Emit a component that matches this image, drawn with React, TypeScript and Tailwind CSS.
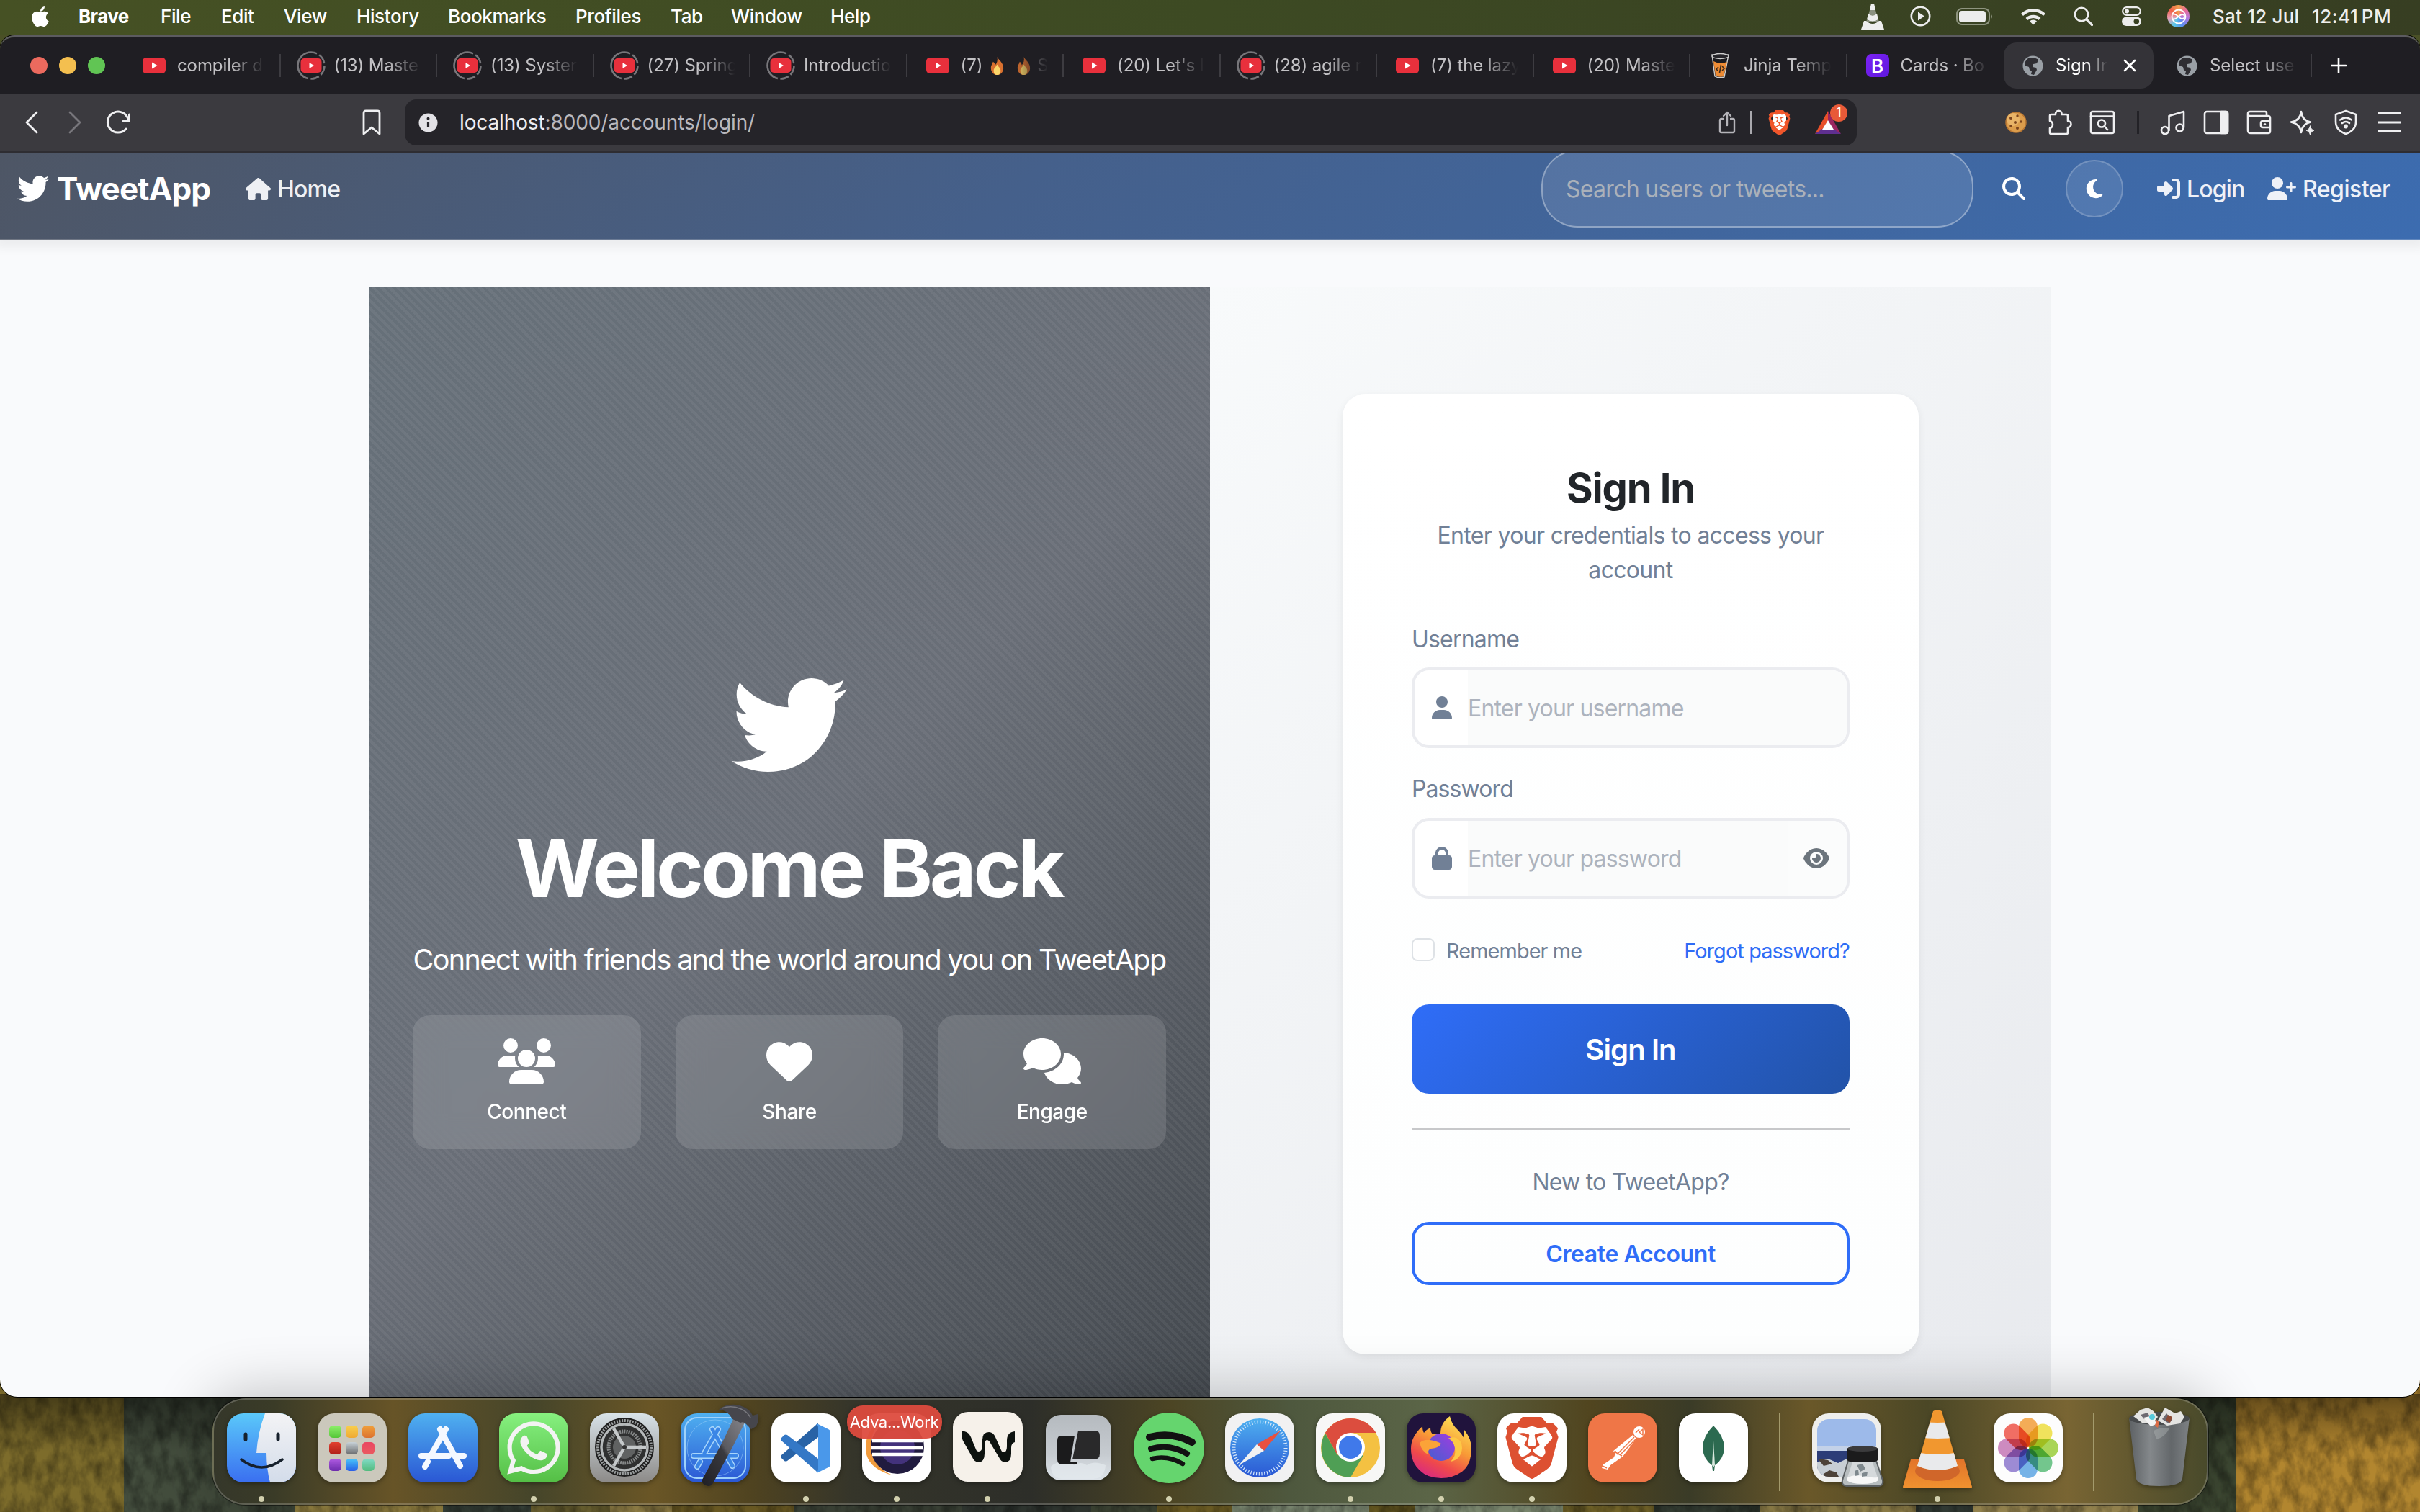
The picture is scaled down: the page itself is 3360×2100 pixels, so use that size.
import React from "react";
import {
  FaApple,
  FaTwitter,
  FaHouse,
  FaMagnifyingGlass,
  FaMoon,
  FaRightToBracket,
  FaUserPlus,
  FaUsers,
  FaHeart,
  FaComments,
  FaUser,
  FaLock,
  FaEye,
  FaWhatsapp,
} from "react-icons/fa6";
import { SiBrave } from "react-icons/si";

/* ---------- macOS menu bar ---------- */

const menuItems: [string, string][] = [
  ["Brave", "w-[114px] font-bold tracking-[-0.6px]"],
  ["File", "w-[84px]"],
  ["Edit", "w-[87px]"],
  ["View", "w-[101px]"],
  ["History", "w-[127px]"],
  ["Bookmarks", "w-[177px]"],
  ["Profiles", "w-[132px]"],
  ["Tab", "w-[84px]"],
  ["Window", "w-[138px]"],
  ["Help", "w-[80px]"],
];

function MenuBar() {
  return (
    <div className="flex h-12 items-center bg-gradient-to-r from-[#465124] via-[#3d4a23] to-[#373e22] pb-[3px] pl-[40px] text-[26px] font-medium tracking-[-0.4px] text-white">
      <div className="w-[69px] flex-none">
        <FaApple className="size-[32px]" />
      </div>
      {menuItems.map(([label, cls]) => (
        <div key={label} className={"flex-none whitespace-nowrap " + cls}>
          {label}
        </div>
      ))}
      <div className="flex-1" />
      <div className="flex items-center text-[#ececec]">
        <svg className="mr-[36px] h-[36px] w-[32px]" viewBox="0 0 32 36">
          <path d="M14 0h4l2 9h-8z" fill="#eee" />
          <path d="M12 9h8l2 7H10z" fill="#8b9180" />
          <path d="M10 14q6 5 12 0l2 8q-8 6-16 0z" fill="#eee" />
          <path d="M8 22q8 5 16 0l1 4H7z" fill="#8b9180" />
          <path d="M4 24h3q9 8 18 0h3l4 12H0z" fill="#eee" />
        </svg>
        <svg className="mr-[35px] size-[29px]" viewBox="0 0 29 29" fill="none">
          <circle cx="14.5" cy="14.5" r="12.7" stroke="currentColor" strokeWidth="2.6" />
          <path d="M11 8.5l9 6-9 6z" fill="currentColor" />
        </svg>
        <svg className="mr-[37px] h-[24px] w-[52px]" viewBox="0 0 52 24" fill="none">
          <rect x="1" y="1" width="45" height="22" rx="7" stroke="#8f9580" strokeWidth="2" />
          <rect x="4" y="4" width="37" height="16" rx="4" fill="currentColor" />
          <path d="M48 8q4 4 0 8z" fill="#8f9580" />
        </svg>
        <svg className="mr-[38px] h-[25px] w-[36px]" viewBox="0 0 36 25" fill="none" stroke="currentColor">
          <path d="M2.5 10.5a22 22 0 0 1 31 0" strokeWidth="4.4" />
          <path d="M9 16.5a13 13 0 0 1 18 0" strokeWidth="4.2" />
          <path d="M18 24.5l-5-5a7 7 0 0 1 10 0z" fill="currentColor" stroke="none" />
        </svg>
        <svg className="mr-[40px] size-[27px]" viewBox="0 0 27 27" fill="none" stroke="currentColor" strokeWidth="2.6" strokeLinecap="round">
          <circle cx="11" cy="11" r="9.2" />
          <path d="M18 18l7.5 7.5" strokeWidth="3.2" />
        </svg>
        <svg className="mr-[36px] size-[27px]" viewBox="0 0 27 27" fill="none">
          <rect x="1.2" y="1.2" width="24.6" height="10.6" rx="5.3" stroke="currentColor" strokeWidth="2.2" />
          <circle cx="7" cy="6.5" r="3" fill="currentColor" />
          <rect x="0" y="14.5" width="27" height="12.5" rx="6.2" fill="currentColor" />
          <circle cx="20.3" cy="20.7" r="3.8" fill="#394122" />
        </svg>
        <div className="mr-[32px] flex size-[31px] items-center justify-center rounded-full bg-[conic-gradient(#f0a050,#e86a9a,#b07ae0,#5b8cf0,#58c8e8,#e8a0b8,#f0604a,#f0a050)]">
          <svg className="size-[24px]" viewBox="0 0 24 24" fill="none" stroke="#fff" strokeWidth="1.8">
            <circle cx="12" cy="12" r="9.5" />
            <path d="M4 9c5-3 8 6 13 6 4 0 4-6 0-6-5 0-8 9-13 6" />
          </svg>
        </div>
      </div>
      <div className="w-[138px] flex-none whitespace-nowrap tracking-[0.2px] text-[#efefec]">Sat 12 Jul</div>
      <div className="w-[150px] flex-none whitespace-nowrap tracking-[0.5px] text-[#efefec] [word-spacing:-3px]">12:41 PM</div>
    </div>
  );
}

/* ---------- Browser tabs ---------- */

function YouTubeIcon({ loading }: { loading?: boolean }) {
  return (
    <svg className="size-[40px]" viewBox="0 0 40 40" fill="none">
      {loading ? (
        <>
          <circle cx="20" cy="20" r="18.5" stroke="#77767a" strokeWidth="2.6" strokeDasharray="14 3.5 12 3.5 62 3.5 14 3.7" />
          <rect x="5.5" y="10" width="29" height="20" rx="5" fill="#e8303c" />
          <path d="M17.500 16v8l6.500-4z" fill="#fff" />
        </>
      ) : (
        <>
          <rect x="4" y="9" width="32" height="22" rx="5" fill="#e8303c" />
          <path d="M17 15.500v9l7.500-4.500z" fill="#fff" />
        </>
      )}
    </svg>
  );
}

function Globe() {
  return (
    <svg className="size-[29px]" viewBox="0 0 29 29">
      <circle cx="14.500" cy="14.500" r="14" fill="#9aa0a6" />
      <path d="M14 3q6 1 8 3l-2 5-5 1-1 4 5 1 1 3-4 7-4-1 1-4-3-2-1-4-5-2-1 2q-1-8 5-12z" fill="#2f2e33" />
    </svg>
  );
}

function Flame() {
  return (
    <svg className="size-[25px] flex-none" viewBox="0 0 26 26">
      <path d="M13 0c2 5 9 8 9 16 0 6-4 10-9 10s-9-4-9-10c0-4 2-5 3-9 2 1 3 3 3 5 3-3 4-7 3-12z" fill="#d8702f" />
      <path d="M13 11c2 4 5 5 5 9 0 4-2 6-5 6s-5-2-5-6 3-5 5-9z" fill="#fbd66a" />
    </svg>
  );
}

function JinjaIcon() {
  return (
    <svg className="size-[36px]" viewBox="0 0 36 36">
      <path d="M6 3l4 30q5 3 13 1l6-31z" fill="#1b1b1f" stroke="#cfcfcf" strokeWidth="1.4" />
      <path d="M8 12l3 20q5 3 11 1l5-20q-10 4-19-1z" fill="#ee8c35" />
      <ellipse cx="17.500" cy="5" rx="11.500" ry="3.500" fill="#26252a" stroke="#cfcfcf" strokeWidth="1.300" />
      <path d="M15 20l-3 3 3 3M20 19l3 3-3 3M18.500 17l-2 11" fill="none" stroke="#3a2a1c" strokeWidth="1.600" />
    </svg>
  );
}

function BootstrapIcon() {
  return (
    <div className="flex size-[32px] items-center justify-center rounded-[7px] bg-gradient-to-br from-[#7b22f5] to-[#5f17dd] text-[26px] font-semibold text-white">
      B
    </div>
  );
}

const tabs: { icon: React.ReactNode; title: React.ReactNode; sep?: boolean; active?: boolean }[] = [
  { icon: <YouTubeIcon />, title: "compiler d", sep: true },
  { icon: <YouTubeIcon loading />, title: "(13) Maste", sep: true },
  { icon: <YouTubeIcon loading />, title: "(13) Syster", sep: true },
  { icon: <YouTubeIcon loading />, title: "(27) Spring", sep: true },
  { icon: <YouTubeIcon loading />, title: "Introductio", sep: true },
  {
    icon: <YouTubeIcon />,
    title: (
      <span className="flex items-center">
        (7)
        <span className="ml-[8px] mr-[12px] flex-none">
          <Flame />
        </span>
        <Flame />
        <span className="ml-[6px]">S</span>
      </span>
    ),
    sep: true,
  },
  { icon: <YouTubeIcon />, title: "(20) Let's l", sep: true },
  { icon: <YouTubeIcon loading />, title: "(28) agile r", sep: true },
  { icon: <YouTubeIcon />, title: "(7) the lazy", sep: true },
  { icon: <YouTubeIcon />, title: "(20) Maste", sep: true },
  { icon: <JinjaIcon />, title: "Jinja Temp", sep: true },
  { icon: <BootstrapIcon />, title: "Cards · Bo" },
  { icon: <Globe />, title: "Sign In", active: true },
  { icon: <Globe />, title: "Select use", sep: true },
];

function TabStrip() {
  return (
    <div className="flex h-[78px] items-center bg-[#1f1e23] pl-[42px] pr-[40px]">
      <div className="flex w-[130px] flex-none gap-4">
        <div className="size-6 rounded-full bg-[#ec6a5e]" />
        <div className="size-6 rounded-full bg-[#f4bf4f]" />
        <div className="size-6 rounded-full bg-[#61c554]" />
      </div>
      {tabs.map((t, i) => (
        <div
          key={i}
          className={
            "flex h-[64px] flex-none items-center " +
            (t.active ? "mr-[4px] w-[208px] rounded-[18px] bg-[#343338] text-white" : "w-[217.500px] text-[#c3c2c5] last-of-type:w-[216px]")
          }
        >
          <div className={"flex w-[40px] flex-none justify-center " + (t.active ? "ml-[20px]" : "ml-[22px]")}>{t.icon}</div>
          <div
            className={
              "ml-[12px] flex-none overflow-hidden whitespace-nowrap text-[24px] leading-[34px] tracking-[-0.1px] " +
              (t.active
                ? "w-[82px] [mask-image:linear-gradient(to_right,black_55%,transparent_88%)]"
                : "w-[128px] [mask-image:linear-gradient(to_right,black_58%,transparent_95%)]")
            }
          >
            {t.title}
          </div>
          {t.active && (
            <svg className="ml-[12px] size-[18px]" viewBox="0 0 18 18" stroke="#fff" strokeWidth="2.600" strokeLinecap="round">
              <path d="M2 2l14 14M16 2L2 16" />
            </svg>
          )}
          <div className="flex-1" />
          {t.sep && <div className="h-8 w-[2px] bg-[#3d3c41]" />}
        </div>
      ))}
      <svg className="ml-[26px] size-[22px]" viewBox="0 0 22 22" stroke="#fff" strokeWidth="2.600" strokeLinecap="round">
        <path d="M11 1v20M1 11h20" />
      </svg>
    </div>
  );
}

/* ---------- Browser toolbar ---------- */

function Slot({ children }: { children: React.ReactNode }) {
  return (
    <div className="flex w-[60px] flex-none justify-center">
      <svg className="size-[36px]" viewBox="0 0 36 36" fill="none" stroke="#efeff1" strokeWidth="2.600" strokeLinecap="round" strokeLinejoin="round">
        {children}
      </svg>
    </div>
  );
}

function BraveShield() {
  return (
    <div className="relative ml-[21px] flex h-[37px] w-[35px] items-center justify-center">
      <div className="absolute inset-x-[8px] inset-y-[7px] rounded-b-full bg-white" />
      <SiBrave className="relative size-[37px] text-[#f0562b]" />
    </div>
  );
}

function Toolbar() {
  return (
    <div className="flex h-[82px] items-center border-b-2 border-[#2e2d32] bg-[#3b3a3f] pl-[14px]">
      <Slot>
        <path d="M25 4L11 18l14 14" strokeWidth="2.800" />
      </Slot>
      <Slot>
        <path d="M11 4l14 14-14 14" stroke="#77767b" strokeWidth="2.800" />
      </Slot>
      <Slot>
        <path d="M29 27a14.500 14.500 0 1 1 3-13" strokeWidth="3" />
        <path d="M33.500 7v9.500h-9" strokeWidth="3" />
      </Slot>
      <div className="ml-[292px]">
        <Slot>
          <path d="M7 5q0-3 3-3h16q3 0 3 3v29l-11-9-11 9z" strokeWidth="2.800" />
        </Slot>
      </div>
      <div className="ml-4 flex h-16 w-[2016px] flex-none items-center rounded-2xl bg-[#252429] pl-[19px] pr-[22px]">
        <svg className="size-[27px]" viewBox="0 0 27 27">
          <circle cx="13.500" cy="13.500" r="13" fill="#e3e2e6" />
          <path d="M13.500 12v8" stroke="#252429" strokeWidth="3.200" />
          <circle cx="13.500" cy="7.800" r="2" fill="#252429" />
        </svg>
        <div className="ml-[30px] whitespace-nowrap text-[28px] tracking-[-0.120px] text-[#b9b8bd]">
          <span className="text-[#ededf0]">localhost</span>:8000/accounts/login/
        </div>
        <div className="flex-1" />
        <svg className="h-[34px] w-[24px]" viewBox="0 0 24 34" fill="none" stroke="#b5b4b9" strokeWidth="2.400" strokeLinecap="round" strokeLinejoin="round">
          <path d="M7 12H4q-2 0-2 2v15q0 2 2 2h16q2 0 2-2V14q0-2-2-2h-3M12 21V3M7 8l5-5 5 5" />
        </svg>
        <div className="ml-[20px] h-8 w-[2px] bg-[#aaa9ae]" />
        <BraveShield />
        <div className="relative ml-[32px]">
          <svg className="h-[32px] w-[36px]" viewBox="0 0 36 32">
            <path d="M18 0v14l-8 12L0 32z" fill="#e8502a" />
            <path d="M18 0l18 32-10-6-8-12z" fill="#9b2560" />
            <path d="M0 32l10-7h16l10 7z" fill="#5f2f90" />
            <path d="M18 13l8 13H10z" fill="#fff" />
          </svg>
          <div className="absolute -right-[9px] -top-[9px] flex size-[24px] items-center justify-center rounded-full bg-[#e85a38] text-[17px] font-medium text-white">
            1
          </div>
        </div>
      </div>
      <div className="ml-[191px] flex items-center">
        <Slot>
          <circle cx="18" cy="18" r="14" fill="#dc9d4c" stroke="#b97733" strokeWidth="1.500" />
          <circle cx="14" cy="14" r="9" fill="#e9b468" stroke="none" />
          <g fill="#7a431d" stroke="none">
            <circle cx="11" cy="12" r="2" />
            <circle cx="20" cy="9" r="1.700" />
            <circle cx="17" cy="18" r="2" />
            <circle cx="25" cy="17" r="1.800" />
            <circle cx="11" cy="23" r="1.800" />
            <circle cx="20" cy="26" r="2" />
          </g>
        </Slot>
        <Slot>
          <path d="M5 9q0-2 2-2h6V6a4 4 0 0 1 8.500 0v1H28q2 0 2 2v7a4.500 4.500 0 0 1 0 9v7q0 2-2 2H7q-2 0-2-2v-6q4-1 4-5t-4-5z" />
        </Slot>
        <Slot>
          <rect x="2" y="3" width="32" height="30" rx="2.500" />
          <path d="M2 9.500h32" />
          <circle cx="17" cy="19.500" r="5" />
          <path d="M21 23.500l4 4.500" />
        </Slot>
        <div className="flex w-[38px] justify-center">
          <div className="h-8 w-[3px] bg-[#232227]" />
        </div>
        <Slot>
          <path d="M12.500 29V9L33 3v22" />
          <circle cx="7" cy="29" r="5" />
          <circle cx="27.500" cy="25.500" r="5" />
        </Slot>
        <Slot>
          <rect x="2" y="3" width="32" height="30" rx="3" />
          <path d="M25 3h7q2 0 2 2v26q0 2-2 2h-7z" fill="#efeff1" />
        </Slot>
        <Slot>
          <path d="M28 9V5q0-2-2-2H5Q2 3 2 6v23q0 4 4 4h24q3 0 3-3V12q0-3-3-3H5Q2 9 2 6M33 16H23q-3 0-3 3v3q0 3 3 3h10M25 20.500h1" />
        </Slot>
        <Slot>
          <path d="M16 3q1.500 12.500 13 14.500Q17.500 20 16 32 14.500 20 2 17.500 14.500 15.500 16 3z" />
          <path d="M28.500 23q.8 5 5.500 6-4.700 1-5.500 6-.8-5-5.500-6 4.700-1 5.500-6z" fill="#efeff1" strokeWidth="1" />
        </Slot>
        <Slot>
          <path d="M18 2l14 5v10q0 12-14 17Q4 29 4 17V7z" />
          <path d="M10 14.500q8-6 16 0M13 19q5-4 10 0" />
          <circle cx="18" cy="23.500" r="1.600" fill="#efeff1" />
        </Slot>
        <Slot>
          <path d="M2 5.500h32M2 18h32M2 30.500h32" strokeWidth="2.800" strokeLinecap="butt" />
        </Slot>
      </div>
    </div>
  );
}

/* ---------- TweetApp page ---------- */

function NavBar() {
  return (
    <div className="relative z-10 h-[122px] overflow-hidden border-b-2 border-white/20 bg-[linear-gradient(135deg,#4e5665_0%,#45608b_42%,#3c6cb0_100%)] text-white">
      <div className="flex h-[100px] items-center">
        <FaTwitter className="ml-[24px] size-[44px] flex-none" />
        <div className="ml-[11px] w-[262px] flex-none whitespace-nowrap text-[44px] font-bold tracking-[-0.9px]">TweetApp</div>
        <FaHouse className="size-[35px] flex-none text-[#eef0f4]" />
        <div className="ml-[9px] flex-none whitespace-nowrap pt-[2px] text-[32px] font-medium tracking-[-0.8px] text-[#eef0f4]">Home</div>
        <div className="flex-1" />
        <div className="flex h-[108px] w-[600px] flex-none items-center rounded-[50px] border-2 border-white/35 bg-white/10 pl-[32px] pt-[2px] text-[32px] tracking-[-0.700px] text-[#aab1ba]">
          Search users or tweets...
        </div>
        <FaMagnifyingGlass className="ml-[40px] size-[32px] flex-none" />
        <div className="ml-[56px] flex size-[80px] flex-none items-center justify-center rounded-full border-2 border-white/20 bg-white/10">
          <FaMoon className="size-[30px]" />
        </div>
        <FaRightToBracket className="ml-[47px] size-[32px] flex-none text-[#eef1f8]" />
        <div className="ml-[9px] w-[112px] flex-none whitespace-nowrap pt-[2px] text-[32px] font-medium tracking-[-0.8px] text-[#eef1f8]">Login</div>
        <FaUserPlus className="h-[32px] w-[40px] flex-none text-[#eef1f8]" />
        <div className="ml-[9px] w-[163px] flex-none whitespace-nowrap pt-[2px] text-[32px] font-medium tracking-[-0.5px] text-[#eef1f8]">Register</div>
      </div>
    </div>
  );
}

function Feature({ icon, label }: { icon: React.ReactNode; label: string }) {
  return (
    <div className="flex h-[186px] flex-1 flex-col items-center rounded-[24px] bg-white/12 pt-8 text-white backdrop-blur-[20px]">
      {icon}
      <div className="mt-[17px] text-[28px] font-medium leading-[42px] tracking-[-0.45px]">{label}</div>
    </div>
  );
}

function WelcomePanel() {
  return (
    <div className="flex w-[1168px] flex-none flex-col items-center bg-[repeating-linear-gradient(45deg,transparent_0_4px,rgba(255,255,255,0.05)_4px_8px),linear-gradient(135deg,#667079_0%,#696e77_50%,#44494f_100%)] pt-[529px] text-white">
      <FaTwitter className="size-[160px]" />
      <h1 className="mt-[51px] whitespace-nowrap pr-[2px] text-[112px] font-bold leading-[134px] tracking-[-4.1px]">Welcome Back</h1>
      <p className="mt-[31px] whitespace-nowrap text-[39.500px] leading-[60px] tracking-[-1.600px]">
        Connect with friends and the world around you on TweetApp
      </p>
      <div className="mt-[47px] flex w-[1046px] gap-12">
        <Feature icon={<FaUsers className="h-[64px] w-[80px]" />} label="Connect" />
        <Feature icon={<FaHeart className="size-[64px]" />} label="Share" />
        <Feature icon={<FaComments className="h-[64px] w-[80px]" />} label="Engage" />
      </div>
    </div>
  );
}

function Field({ icon, text, trailing }: { icon: React.ReactNode; text: string; trailing?: React.ReactNode }) {
  return (
    <div className="flex h-[112px] items-stretch overflow-hidden rounded-[24px] border-4 border-[#ebecf0] bg-white">
      <div className="flex w-[74px] flex-none items-center pl-[24px] text-[#718096]">{icon}</div>
      <div className="flex flex-1 items-center whitespace-nowrap bg-[#fafbfb] pt-[1px] text-[32px] tracking-[-0.820px] text-[#adb3bd]">{text}</div>
      {trailing}
    </div>
  );
}

function SignInCard() {
  return (
    <div className="mt-[149px] h-[1334px] w-[800px] rounded-[32px] bg-gradient-to-b from-white to-[#fdfefe] px-[96px] pt-[97px] shadow-[0_4px_12px_rgba(0,0,0,0.07)]">
      <h2 className="text-center text-[56px] font-bold leading-[68px] tracking-[-1.1px] text-[#212529]">Sign In</h2>
      <p className="mt-2 text-center text-[32px] leading-[48px] tracking-[-0.670px] text-[#718096]">
        Enter your credentials to access your
        <br />
        account
      </p>
      <div className="mt-12 text-[32px] leading-[48px] tracking-[-0.8px] text-[#718096]">Username</div>
      <div className="mt-[15px]">
        <Field icon={<FaUser className="h-[32px] w-[28px]" />} text="Enter your username" />
      </div>
      <div className="mt-[33px] text-[32px] leading-[48px] tracking-[-0.9px] text-[#718096]">Password</div>
      <div className="mt-[16px]">
        <Field
          icon={<FaLock className="h-[32px] w-[28px]" />}
          text="Enter your password"
          trailing={
            <div className="flex w-[81px] flex-none items-center bg-[#fbfcfc] pl-[21px] text-[#6c757d]">
              <FaEye className="h-[32px] w-[36px]" />
            </div>
          }
        />
      </div>
      <div className="mt-[55px] flex h-8 items-center">
        <div className="size-8 flex-none rounded-lg border-2 border-[#dee2e6] bg-white" />
        <div className="ml-[16px] mt-[4px] flex-1 whitespace-nowrap text-[28.800px] tracking-[-0.850px] text-[#718096]">Remember me</div>
        <div className="mt-[4px] whitespace-nowrap text-[28.800px] tracking-[-0.850px] text-[#2e6cf6]">Forgot password?</div>
      </div>
      <div className="mt-[60px] flex h-[124px] items-center justify-center rounded-[24px] bg-[linear-gradient(135deg,#2f6df8,#2253a8)] pt-[2px] text-[40px] font-semibold tracking-[-0.9px] text-white">
        Sign In
      </div>
      <div className="mt-12 h-[2px] bg-[#c7c8ca]" />
      <div className="mt-[49px] text-center text-[32px] leading-[48px] tracking-[-0.760px] text-[#718096]">New to TweetApp?</div>
      <div className="mt-[31px] flex h-[88px] items-center justify-center rounded-[24px] border-4 border-[#2f6df8] pt-[2px] text-[32px] font-semibold tracking-[-0.4px] text-[#2f6df8]">
        Create Account
      </div>
    </div>
  );
}

function Page() {
  return (
    <div className="flex h-[1728px] flex-col overflow-hidden bg-[#f9fafc]">
      <NavBar />
      <div className="relative z-0 h-0 shadow-[0_0_16px_8px_rgba(0,0,0,0.07)]" />
      <div className="mt-[64px] flex flex-1 justify-center">
        <WelcomePanel />
        <div className="flex w-[1168px] flex-none justify-center bg-[linear-gradient(135deg,#f8fafb,#e8eaee)]">
          <SignInCard />
        </div>
      </div>
    </div>
  );
}

/* ---------- Dock ---------- */

const art = "size-[96px] overflow-visible";

function Finder() {
  return (
    <svg className={art} viewBox="0 0 96 96">
      <defs>
        <linearGradient id="fin" x2="0" y2="1">
          <stop stopColor="#5ac8fa" />
          <stop offset="1" stopColor="#3a6ff0" />
        </linearGradient>
        <linearGradient id="fin2" x2="0" y2="1">
          <stop stopColor="#f3f3f5" />
          <stop offset="1" stopColor="#d3dcea" />
        </linearGradient>
        <clipPath id="finc">
          <rect width="96" height="96" rx="23" />
        </clipPath>
      </defs>
      <g clipPath="url(#finc)">
        <rect width="96" height="96" fill="url(#fin)" />
        <path d="M53 0Q43 26 41 55h14q0 22 5 41h40V0z" fill="url(#fin2)" />
      </g>
      <path d="M26 29v7M71 29v7" stroke="#16202c" strokeWidth="5" strokeLinecap="round" />
      <path d="M20 64q28 22 57 0" fill="none" stroke="#16202c" strokeWidth="3.500" strokeLinecap="round" />
    </svg>
  );
}

const launchpadTiles = [
  "bg-gradient-to-b from-[#8df06a] to-[#55c637]",
  "bg-gradient-to-b from-[#f8cf4c] to-[#efa934]",
  "bg-gradient-to-b from-[#f0a03a] to-[#dc7230]",
  "bg-gradient-to-b from-[#e2402f] to-[#b01f1a]",
  "bg-gradient-to-b from-[#c8d2d8] to-[#6c6e70]",
  "bg-gradient-to-b from-[#ea4662] to-[#ea5a60]",
  "bg-gradient-to-b from-[#b05ae2] to-[#6d2bac]",
  "bg-gradient-to-b from-[#4cc4fa] to-[#2c5ee6]",
  "bg-gradient-to-b from-[#80dbc6] to-[#52bb7e]",
];

function Launchpad() {
  return (
    <div className="grid size-[96px] grid-cols-[repeat(3,17px)] content-center justify-center gap-[6px] rounded-[23px] bg-[#cbc8bc]">
      {launchpadTiles.map((c) => (
        <div key={c} className={"size-[17px] rounded-[5px] " + c} />
      ))}
    </div>
  );
}

function Strokes({ color, width }: { color: string; width: number }) {
  return (
    <g stroke={color} strokeWidth={width} strokeLinecap="round" fill="none">
      <path d="M52 22L33 55M44 22l28 51M18 59h38M66 59h11M27 67l-4 7" />
    </g>
  );
}

function AppStore() {
  return (
    <svg className={art} viewBox="0 0 96 96">
      <defs>
        <linearGradient id="as" x2="0" y2="1">
          <stop stopColor="#4fb0f0" />
          <stop offset="1" stopColor="#2a57d4" />
        </linearGradient>
      </defs>
      <rect width="96" height="96" rx="23" fill="url(#as)" />
      <Strokes color="#f4f8ff" width={8} />
    </svg>
  );
}

function Whatsapp() {
  return (
    <div className="flex size-[96px] items-center justify-center rounded-[23px] bg-gradient-to-b from-[#86f07f] to-[#54bf45] text-[#f3f3f3]">
      <FaWhatsapp className="size-[84px]" />
    </div>
  );
}

function Settings() {
  return (
    <svg className={art} viewBox="0 0 96 96">
      <defs>
        <linearGradient id="set" x2="0" y2="1">
          <stop stopColor="#d8e2e8" />
          <stop offset="1" stopColor="#8c8a88" />
        </linearGradient>
      </defs>
      <rect width="96" height="96" rx="23" fill="url(#set)" />
      <circle cx="48" cy="47" r="41" fill="#1e1e1e" />
      <circle cx="48" cy="47" r="37" fill="none" stroke="#9a9e9f" strokeWidth="4" strokeDasharray="2 1.700" />
      <circle cx="48" cy="47" r="32" fill="#2f3030" stroke="#b5b9ba" strokeWidth="3.500" />
      <circle cx="48" cy="47" r="22" fill="none" stroke="#858888" strokeWidth="5" strokeDasharray="2 1.200" />
      <circle cx="48" cy="47" r="16" fill="#606262" />
      <path d="M48 47h30M48 47L33 21M48 47L33 73" stroke="#c5c9ca" strokeWidth="4.500" />
      <circle cx="48" cy="47" r="3" fill="#333" />
    </svg>
  );
}

function Xcode() {
  return (
    <svg className={art} viewBox="0 0 96 96">
      <defs>
        <linearGradient id="ham" x1="1" x2="0" y2="1">
          <stop stopColor="#85858b" />
          <stop offset="0.450" stopColor="#5a5a60" />
          <stop offset="0.500" stopColor="#3a3a40" />
          <stop offset="1" stopColor="#1f1f24" />
        </linearGradient>
      </defs>
      <rect width="96" height="96" rx="23" fill="url(#as)" />
      <g fill="none" stroke="#9fd2fa">
        <rect x="6" y="6" width="84" height="84" rx="17" strokeWidth="2" />
        <circle cx="48" cy="48" r="39" opacity="0.500" />
      </g>
      <Strokes color="#a9d6fb" width={8} />
      <Strokes color="#3b86e6" width={5} />
      <path d="M74 6l16 5-18 36-27 50q-4 6-10 3-7-3-5-8l29-54z" fill="url(#ham)" />
      <path d="M53-5Q64-15 82-11q14 4 18 14l7-2q3 7-2 17l-7 4-7-7q-3-4-8-2L72 8Q65-5 53-5z" fill="#46464c" />
      <path d="M57-7q14-5 27 1 9 4 13 12" fill="none" stroke="#76767c" strokeWidth="1.500" />
    </svg>
  );
}

function VSCode() {
  return (
    <svg className={art} viewBox="0 0 96 96">
      <rect width="96" height="96" rx="23" fill="#fff" />
      <path d="M14 58q-2 2 0 4l4 4q2 1 4 0l43-33V14q-2 0-3 2z" fill="#2963a6" />
      <path d="M14 38q-2-2 0-4l4-4q2-1 4 0l43 33v19q-2 0-3-2z" fill="#3478c6" />
      <path d="M65 15l14 7q3 1 3 5v43q0 4-3 5l-14 7q-2 1-3-1 3 0 3-4V20q0-4-3-4 1-2 3-1z" fill="#4a98ea" />
    </svg>
  );
}

function Eclipse() {
  return (
    <div className="relative">
      <svg className={art} viewBox="0 0 96 96">
        <rect width="96" height="96" rx="23" fill="#fff" />
        <path d="M30 8Q5 20 5 48t37 38Q14 74 12 46 12 22 30 8z" fill="#f19b3c" />
        <circle cx="49" cy="47" r="37" fill="#211b3f" />
        <circle cx="49" cy="47" r="24" fill="#43327c" />
        <path d="M14 38h70M12 48h73M14 57h70" stroke="#fff" strokeWidth="4.500" />
      </svg>
      <div className="absolute -left-[21px] -top-[11px] flex h-[46px] w-[132px] items-center justify-center whitespace-nowrap rounded-[22px] bg-[#dd4b3e]/95 pt-[1px] text-[22px] tracking-[-0.3px] text-white">
        Adva...Work
      </div>
    </div>
  );
}

function WApp() {
  return (
    <svg className={art} viewBox="0 0 96 96">
      <rect y="-2" width="97" height="97" rx="21" fill="#f6f1ea" />
      <path d="M12 25h4q6 1 9 8l7 17q1 3 4 3 5-1 5-8v-8q0-11 9-11 6 0 9 7l8 18q1 3 4 3 4-1 4-8v-8q0-12 11-13v15q-5 1-5 8v8q0 11-8 12-6 0-9-7L52 41q-2-4-5-4-3 1-3 6v13q0 11-8 12-6 0-9-7L14 38q-2-4-2-7z" fill="#0d120f" />
    </svg>
  );
}

function GrayApp() {
  return (
    <svg className={art} viewBox="0 0 96 96">
      <defs>
        <linearGradient id="gr" x2="0" y2="1">
          <stop stopColor="#b5babf" />
          <stop offset="0.600" stopColor="#c6cbd0" />
          <stop offset="1" stopColor="#dde3e9" />
        </linearGradient>
      </defs>
      <rect x="3" y="2" width="91" height="91" rx="21" fill="url(#gr)" />
      <path d="M10 74q8-8 16-3 8-6 16 1 10-6 18 0 10-7 26 0-1 18-17 19H26Q11 90 10 74z" fill="#e4e9ee" opacity="0.700" />
      <path d="M24 31h19l-6 37h10l-1 3H26q-7 0-7-7V38q0-7 5-7z" fill="#1b1b1c" />
      <path d="M48 24h23q7 0 7 7v25q0 8-8 8H40z" fill="#29292a" />
    </svg>
  );
}

function Spotify() {
  return (
    <svg className={art} viewBox="0 0 96 96">
      <circle cx="48" cy="48" r="49" fill="#65d56e" />
      <g fill="none" stroke="#121212" strokeLinecap="round">
        <path d="M21 33q31-8 59 7" strokeWidth="10" />
        <path d="M23 49q27-7 50 7" strokeWidth="8" />
        <path d="M25 63q22-5 42 7" strokeWidth="6.500" />
      </g>
    </svg>
  );
}

function Safari() {
  return (
    <svg className={art} viewBox="0 0 96 96">
      <rect width="96" height="96" rx="23" fill="#f1f1f2" />
      <circle cx="48" cy="48" r="41" fill="url(#as)" />
      <circle cx="48" cy="48" r="36" fill="none" stroke="#d6e9fb" strokeWidth="5" strokeDasharray="1.200 2.570" />
      <path d="M77 24L54 52l-10-9z" fill="#e8503f" />
      <path d="M19 72l25-29 10 9z" fill="#f2f2f2" />
    </svg>
  );
}

function Chrome() {
  return (
    <svg className={art} viewBox="0 0 96 96">
      <rect width="96" height="96" rx="23" fill="#f7f7f6" />
      <circle cx="48" cy="48" r="41" fill="#f4c142" />
      <path d="M48 48L30 58 13 27.500A41 41 0 0 0 48 89l18-31z" fill="#4f9f55" />
      <path d="M48 27h35.500A41 41 0 0 0 13 27l17 31z" fill="#dc4d3e" />
      <circle cx="48" cy="47" r="20" fill="#fff" />
      <circle cx="48" cy="47" r="16" fill="#4079ea" />
    </svg>
  );
}

function Firefox() {
  return (
    <svg className={art} viewBox="0 0 96 96">
      <defs>
        <linearGradient id="ff" x1="0.800" x2="0.300" y2="1">
          <stop stopColor="#fde85a" />
          <stop offset="0.450" stopColor="#f89a36" />
          <stop offset="0.750" stopColor="#f04a4a" />
          <stop offset="1" stopColor="#d82a80" />
        </linearGradient>
        <linearGradient id="ffp" x1="1" x2="0" y2="1">
          <stop stopColor="#a23be0" />
          <stop offset="1" stopColor="#4460d0" />
        </linearGradient>
      </defs>
      <rect width="96" height="96" rx="23" fill="#20133c" />
      <path d="M60 4q2 11 12 20 5 5 8 11v-12q10 12 10 26 0 22-13 32-13 9-29 9-19 0-30-11Q6 68 6 49q0-17 16-31 0 6 2 9 4-5 9-7 0 6 3 9l11-1q0-15 13-24z" fill="url(#ff)" />
      <circle cx="48" cy="47" r="19" fill="url(#ffp)" />
      <path d="M18 41q6-5 14-4 9 1 16 5-3 6-14 7-5 1-4 8-9-4-12-16z" fill="#fba338" />
      <path d="M57 35q8 2 10 13 2 12-6 19 15-3 16-19 0-10-8-14-5-2-12 1z" fill="#fdc845" />
    </svg>
  );
}

function Brave() {
  return (
    <div className="flex size-[96px] items-center justify-center rounded-[23px] bg-white text-[#dd5031]">
      <SiBrave className="size-[86px]" />
    </div>
  );
}

function Postman() {
  return (
    <svg className={art} viewBox="0 0 96 96">
      <rect width="96" height="96" rx="23" fill="#ef7647" />
      <circle cx="71" cy="26" r="8" fill="#fff" />
      <path d="M71 26l5-4v8zM66 27l5-5" stroke="#ef7647" strokeWidth="1.500" fill="none" />
      <path d="M62 30l5 5-19 25-17 12-4 6-8-2 2-5 15-10 3-9-5 1z" fill="#fff" />
      <path d="M64 33L40 57M67 35L44 58M38 54l9 5M20 73l6 3" stroke="#ef7647" strokeWidth="1.500" />
    </svg>
  );
}

function Mongo() {
  return (
    <svg className={art} viewBox="0 0 96 96">
      <rect width="96" height="96" rx="23" fill="#fff" />
      <path d="M48 17q15 15 15 31-1 16-13 24l-1 8h-2l-1-8Q34 64 33 48q0-16 15-31z" fill="#2c6a50" />
      <path d="M48 38l2 34-2 3-2-3z" fill="#d8e8de" />
    </svg>
  );
}

function Preview() {
  return (
    <svg className={art} viewBox="0 0 96 96">
      <defs>
        <clipPath id="pv">
          <rect x="7" y="8" width="82" height="80" rx="16" />
        </clipPath>
      </defs>
      <rect width="96" height="96" rx="23" fill="#eeeeec" />
      <g clipPath="url(#pv)">
        <rect width="96" height="54" fill="#9dbaea" />
        <rect y="45" width="96" height="8" fill="#c3d1e8" />
        <rect y="52" width="96" height="40" fill="#2c3d78" />
        <path d="M6 68l16-5 14 6 14-7v28H6z" fill="#c7ced4" />
        <path d="M8 63l14 2 6 5-12 3zM16 84l8-5 10 3 4 8H14z" fill="#4d4238" />
      </g>
      <path d="M50 66h39l9 27q2 8-8 8H50q-10 0-8-8z" fill="#b7bdbf" stroke="#5b6063" strokeWidth="2" />
      <path d="M56 68h28l8 24q-20 7-44 0z" fill="#d5d9db" />
      <path d="M48 90q10-6 22-3t21 2l1 4q-6 5-22 5t-22-5z" fill="#f7f7f7" />
      <path d="M62 72l8-2 4 7-7 4zM59 80l5-2 1 8-6 1zM69 83l8-2-1 6-7 1z" fill="#7e888d" />
      <rect x="48" y="47" width="44" height="20" rx="5" fill="#1b1b1c" />
      <ellipse cx="70" cy="49" rx="21" ry="4" fill="#3b3b3d" />
    </svg>
  );
}

function Vlc() {
  return (
    <svg className={art} viewBox="0 0 96 96">
      <defs>
        <linearGradient id="vl" x2="0" y2="1">
          <stop stopColor="#e2742a" />
          <stop offset="1" stopColor="#f0922f" />
        </linearGradient>
        <clipPath id="vlc">
          <path d="M42-3q6-4 12 0l22 76q-28 12-56 0z" />
        </clipPath>
      </defs>
      <path d="M11 64h74l11 38q0 2-2 2H2q-2 0-2-2z" fill="url(#vl)" />
      <ellipse cx="48" cy="80" rx="31" ry="14" fill="#d0662a" />
      <g clipPath="url(#vlc)">
        <rect width="96" height="110" y="-10" fill="#f1972f" />
        <path d="M0 8q48 10 96 0v22q-48 10-96 0z" fill="#e9eaec" />
        <path d="M0 50q48 14 96 0v24q-48 12-96 0z" fill="#e9eaec" />
      </g>
    </svg>
  );
}

const petals: [number, string][] = [
  [0, "#f5a03a"],
  [45, "#f0e040"],
  [90, "#9bd03c"],
  [135, "#5cbf7a"],
  [180, "#5fa8e6"],
  [225, "#8d78cf"],
  [270, "#c778b8"],
  [315, "#f0554a"],
];

function Photos() {
  return (
    <svg className={art} viewBox="0 0 96 96">
      <rect width="96" height="96" rx="23" fill="#fdfdfd" />
      {petals.map(([a, c]) => (
        <rect key={a} x="35" y="6" width="26" height="41" rx="13" fill={c} opacity="0.850" transform={`rotate(${a} 48 48)`} className="mix-blend-multiply" />
      ))}
    </svg>
  );
}

function Trash() {
  return (
    <svg className={art} viewBox="0 0 96 96">
      <defs>
        <linearGradient id="tr">
          <stop stopColor="#5d6164" />
          <stop offset="0.350" stopColor="#84888b" />
          <stop offset="0.700" stopColor="#63676a" />
          <stop offset="1" stopColor="#7d8184" />
        </linearGradient>
      </defs>
      <path d="M6 6q42 12 84 0L80 91q-2 10-32 10t-32-10z" fill="url(#tr)" />
      <ellipse cx="48" cy="7" rx="42" ry="9" fill="#474a4c" />
      <path d="M12 4L22-5l10-3 8 5 6 8-8 10-14-2zM46 10l10-18 14 8 8-3 5 8-6 9-18 3z" fill="#e4e4e2" />
      <path d="M22 2l10-3 3 6-8 3zM52 8l6-8 8 9-5 5z" fill="#6d6a72" />
      <path d="M26 6l14-3 4 12-8 3z" fill="#f4f4f4" />
      <circle cx="38" cy="5" r="4" fill="#57c9dd" />
      <path d="M60 2l6 3-3 8-6-3z" fill="#8d4a34" />
      <path d="M44 9l4 2-2 9-4-3z" fill="#dd6b45" />
      <path d="M40 24q14-6 22-3-6 12-18 15z" fill="#b4b8ba" opacity="0.400" />
    </svg>
  );
}

const dockApps: [React.ReactNode, boolean][] = [
  [<Finder />, true],
  [<Launchpad />, false],
  [<AppStore />, false],
  [<Whatsapp />, true],
  [<Settings />, false],
  [<Xcode />, false],
  [<VSCode />, true],
  [<Eclipse />, true],
  [<WApp />, true],
  [<GrayApp />, false],
  [<Spotify />, true],
  [<Safari />, false],
  [<Chrome />, true],
  [<Firefox />, true],
  [<Brave />, true],
  [<Postman />, false],
  [<Mongo />, false],
];

const dockTools: [React.ReactNode, boolean][] = [
  [<Preview />, false],
  [<Vlc />, true],
  [<Photos />, false],
];

function DockSlot({ children, running }: { children: React.ReactNode; running?: boolean }) {
  return (
    <div className="flex w-[126px] flex-none flex-col items-center">
      <div className="size-[96px] [filter:drop-shadow(0_2px_3px_rgba(0,0,0,0.35))]">{children}</div>
      {running && <div className="mt-[19px] size-2 rounded-full bg-[#d2d0ae]" />}
    </div>
  );
}

function Dock() {
  return (
    <div className="flex h-[148px] w-[2771px] items-start overflow-visible rounded-[46px] border-2 border-white/20 bg-[linear-gradient(to_right,#35372a_0%,#3a3b27_3%,#675427_9%,#45452a_16%,#6a5626_22%,#4f4320_27%,#35352a_32%,#2d2e29_41%,#4c4524_48%,#4e583e_54%,#5b6547_61%,#51451f_69%,#3a3b27_74%,#6a5829_80%,#4b4726_86%,#796533_93%,#494a2b_100%)] pl-[3px] pt-[19px] shadow-[0_0_0_1px_rgba(0,0,0,0.5),0_0_80px_6px_rgba(0,0,0,0.24)]">
      {dockApps.map(([icon, running], i) => (
        <DockSlot key={i} running={running}>
          {icon}
        </DockSlot>
      ))}
      <div className="flex w-[59px] flex-none justify-center">
        <div className="h-[108px] w-[2px] bg-[#a39a6c]" />
      </div>
      {dockTools.map(([icon, running], i) => (
        <DockSlot key={i} running={running}>
          {icon}
        </DockSlot>
      ))}
      <div className="flex w-[56px] flex-none justify-center">
        <div className="h-[108px] w-[2px] bg-[#a39a6c]" />
      </div>
      <DockSlot>
        <Trash />
      </DockSlot>
    </div>
  );
}

/* ---------- Desktop ---------- */

const planks: [number, number, string][] = [
  [0, 172, "#7d6c2b"],
  [172, 238, "#434d3d"],
  [410, 205, "#9a8744"],
  [615, 122, "#3b463d"],
  [737, 110, "#726834"],
  [847, 86, "#9d8a4c"],
  [933, 170, "#766427"],
  [1103, 232, "#40483b"],
  [1335, 180, "#343b35"],
  [1515, 92, "#404837"],
  [1607, 104, "#766527"],
  [1711, 190, "#87957c"],
  [1901, 64, "#716224"],
  [1965, 205, "#87957a"],
  [2170, 126, "#7f6f2d"],
  [2296, 148, "#394338"],
  [2444, 216, "#9a894e"],
  [2660, 80, "#37413a"],
  [2740, 228, "#a59257"],
  [2968, 137, "#3e4933"],
  [3105, 255, "#b2862f"],
];

function Wallpaper() {
  return (
    <svg className="absolute inset-0 h-[2100px] w-[3360px]" viewBox="0 0 3360 2100">
      <defs>
        <filter id="grain" x="0" y="0" width="1" height="1">
          <feTurbulence type="fractalNoise" baseFrequency="0.060 0.035" numOctaves="4" seed="7" />
          <feColorMatrix values="0 0 0 0 0  0 0 0 0 0  0 0 0 0 0  0.750 0 0 0 -0.250" />
        </filter>
        <linearGradient id="shade" x2="0" y2="1">
          <stop stopColor="#000" stopOpacity="0.450" />
          <stop offset="1" stopColor="#000" stopOpacity="0" />
        </linearGradient>
      </defs>
      <rect width="3360" height="200" fill="#4a5026" />
      {planks.map(([x, w, c]) => (
        <rect key={x} x={x} y="1880" width={w} height="220" fill={c} />
      ))}
      <rect y="1880" width="3360" height="220" filter="url(#grain)" />
      <rect y="1936" width="3360" height="80" fill="url(#shade)" />
    </svg>
  );
}

export default function App() {
  return (
    <div className="relative h-[2100px] w-[3360px] overflow-hidden font-['Inter',sans-serif]">
      <Wallpaper />
      <div className="relative flex flex-col items-center">
        <div className="w-full">
          <MenuBar />
        </div>
        <div className="mt-px w-full overflow-hidden rounded-b-[24px] rounded-t-[20px] border-t-[3px] border-[#5c5b60] shadow-[0_0_0_1px_#000]">
          <TabStrip />
          <Toolbar />
          <Page />
        </div>
        <div className="relative mt-[2px]">
          <Dock />
        </div>
      </div>
    </div>
  );
}
